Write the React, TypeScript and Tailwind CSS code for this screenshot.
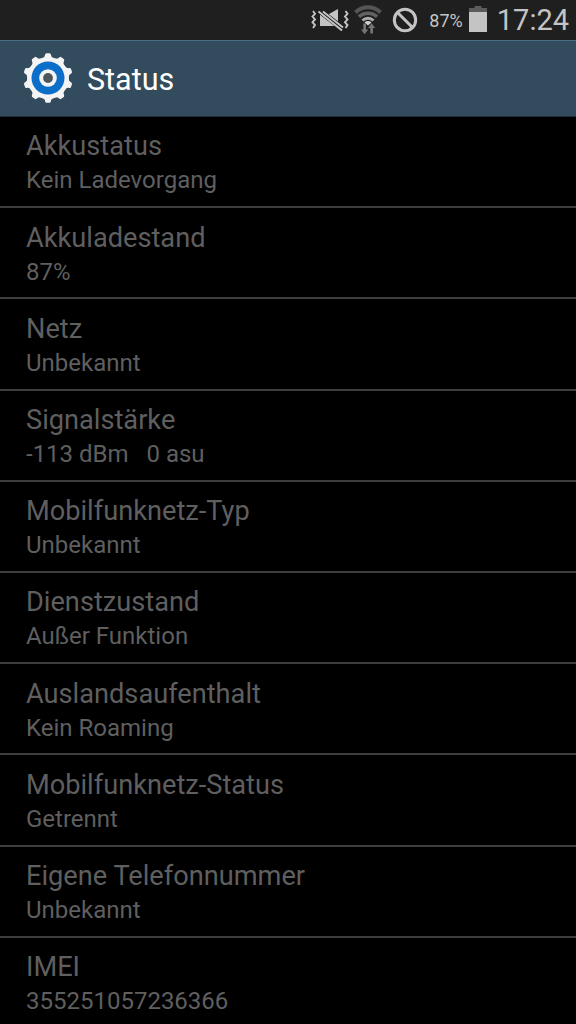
import React from 'react';

interface StatusEntry {
  title: string;
  summary: string;
}

const entries: StatusEntry[] = [
  { title: 'Akkustatus', summary: 'Kein Ladevorgang' },
  { title: 'Akkuladestand', summary: '87%' },
  { title: 'Netz', summary: 'Unbekannt' },
  { title: 'Signalstärke', summary: '-113 dBm   0 asu' },
  { title: 'Mobilfunknetz-Typ', summary: 'Unbekannt' },
  { title: 'Dienstzustand', summary: 'Außer Funktion' },
  { title: 'Auslandsaufenthalt', summary: 'Kein Roaming' },
  { title: 'Mobilfunknetz-Status', summary: 'Getrennt' },
  { title: 'Eigene Telefonnummer', summary: 'Unbekannt' },
  { title: 'IMEI', summary: '355251057236366' },
];

const VibrateMuteIcon = () => (
  <svg width="38" height="26" viewBox="0 0 38 26" fill="none">
    <path d="M9 7h9l9-5v17H9z" fill="#c4c4c4" />
    <path d="M7 2.500l27 21" stroke="#1f1f1f" strokeWidth="6" />
    <path d="M7.500 4.500L31 23.500M12 4.500L32 20.500" stroke="#c4c4c4" strokeWidth="2" />
    <path
      d="M2 4l2 2.800-2.500 2.800L4 12.400l-2.500 2.800L4 18l-2 3M34.500 4l2 2.800-2.500 2.800 2.500 2.800-2.500 2.800 2.500 2.800-2 3"
      stroke="#c4c4c4"
      strokeWidth="1.9"
    />
  </svg>
);

const WifiIcon = () => (
  <svg width="28" height="30" viewBox="0 0 28 30" fill="none">
    <path d="M1.500 7.500a17.500 17.500 0 0 1 25 0" stroke="#555" strokeWidth="4" />
    <path d="M5 11.800a13 13 0 0 1 18 0" stroke="#626262" strokeWidth="3.600" />
    <path d="M8.500 15.500a8 8 0 0 1 11 0" stroke="#a8a8a8" strokeWidth="3" />
    <path d="M10.500 17.500a5 5 0 0 1 7 0L14 20.500z" fill="#d0d0d0" />
    <path d="M9.300 18.500h2.700v6h2.300L10.600 29.300 7 24.500h2.300zM16.300 28.500H19V23h2.300l-3.700-4.800-3.600 4.800h2.300z" fill="#747474" />
  </svg>
);

const BlockedIcon = () => (
  <svg width="26" height="26" viewBox="0 0 26 26" fill="none" stroke="#c4c4c4" strokeWidth="3">
    <circle cx="13" cy="13" r="10.700" />
    <path d="M5.500 5.500l15 15" />
  </svg>
);

const BatteryIcon = () => (
  <svg width="18" height="26" viewBox="0 0 18 26">
    <path d="M0 2h5.500V0h7v2H18v4H0z" fill="#5c5c5c" />
    <path d="M0 6h18v20H0z" fill="#c4c4c4" />
  </svg>
);

const GearIcon = () => (
  <svg width="52" height="52" viewBox="-26 -26 52 52">
    <g fill="#f4f4f4">
      {Array.from({ length: 10 }, (_, i) => (
        <path
          key={i}
          d="M-5.500-19.500Q-3-21.500-2.800-23.500Q-2.600-24.700-1.500-24.700H1.500Q2.600-24.700 2.800-23.500Q3-21.500 5.500-19.500z"
          transform={`rotate(${i * 36})`}
        />
      ))}
      <circle r="21" />
    </g>
    <circle r="16.500" fill="#0b6fca" />
    <circle r="8.800" fill="#f4f4f4" />
    <circle r="4.900" fill="#4b565c" />
  </svg>
);

const StatusBar = () => (
  <div className="flex h-10 shrink-0 items-center justify-end bg-[#1f1f1f] pr-[7px] text-[#c4c4c4]">
    <VibrateMuteIcon />
    <div className="ml-[5px]"><WifiIcon /></div>
    <div className="ml-[10px]"><BlockedIcon /></div>
    <span className="ml-[11px] pt-0.5 text-lg">87%</span>
    <div className="ml-[6px] pb-0.5"><BatteryIcon /></div>
    <span className="ml-[10px] pt-0.5 text-[29px]">17:24</span>
  </div>
);

export default function App() {
  return (
    <div className="flex h-[1024px] w-[576px] flex-col overflow-hidden bg-black font-['Roboto',sans-serif]">
      <StatusBar />
      <div className="flex h-[77px] shrink-0 items-center border-t border-b border-t-[#4a6f85] border-b-[#1c2c38] bg-[#324b5d] pb-px pl-[22px]">
        <GearIcon />
        <span className="ml-[13px] pt-[3px] text-[30.5px] text-white">Status</span>
      </div>
      <div className="text-[#5f5f5f]">
        {entries.map((entry) => (
          <div key={entry.title} className="h-[91.2px] border-b-2 border-[#3e3e3e] pt-[11.4px] pl-[26px]">
            <div className="text-[27.2px] leading-9">{entry.title}</div>
            <div className="text-2xl leading-[33.4px] whitespace-pre">{entry.summary}</div>
          </div>
        ))}
      </div>
    </div>
  );
}
